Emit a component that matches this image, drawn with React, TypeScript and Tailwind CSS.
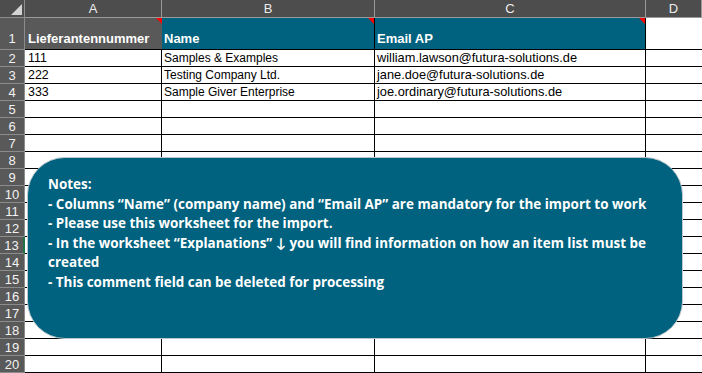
import React from 'react';

const COLS = ['A', 'B', 'C', 'D'];

const DATA = [
  ['111', 'Samples & Examples', 'william.lawson@futura-solutions.de'],
  ['222', 'Testing Company Ltd.', 'jane.doe@futura-solutions.de'],
  ['333', 'Sample Giver Enterprise', 'joe.ordinary@futura-solutions.de'],
];

const NOTES = [
  'Notes:',
  '- Columns \u201cName\u201d (company name) and \u201cEmail AP\u201d are mandatory for the import to work',
  '- Please use this worksheet for the import.',
  '- In the worksheet \u201cExplanations\u201d \u2193 you will find information on how an item list must be',
  'created',
  '- This comment field can be deleted for processing',
];

function RedMark() {
  return (
    <span className="absolute top-0 right-0 w-0 h-0 border-t-[6px] border-l-[6px] border-t-[#ff0000] border-l-transparent" />
  );
}

export default function App() {
  const rows = Array.from({ length: 19 }, (_, i) => i + 2);

  return (
    <div
      className="relative w-[702px] h-[373px] overflow-hidden bg-white"
      style={{ fontFamily: '"Liberation Sans", Arial, sans-serif' }}
    >
      <div className="grid grid-cols-[25px_137px_213px_271px_1fr] grid-rows-[18px_32px_repeat(19,17px)]">
        {/* column headers */}
        <div className="relative bg-[#4d4d4d] border-r border-b border-[#8c8c8c]">
          <svg className="absolute right-[2px] bottom-[2px]" width="11" height="11" viewBox="0 0 11 11">
            <polygon points="11,0 11,11 0,11" fill="#d4d4d4" />
          </svg>
        </div>
        {COLS.map((c) => (
          <div
            key={c}
            className="bg-[#4d4d4d] border-r border-b border-[#9a9a9a] flex items-center justify-center text-[13px] text-[#ececec]"
          >
            {c}
          </div>
        ))}

        {/* row 1 */}
        <div className="bg-[#595959] border-r border-b border-[#8c8c8c] flex items-end justify-center pb-[1px] text-[13px] text-[#f2f2f2]">
          1
        </div>
        <div className="relative bg-[#595959] border-b border-black flex items-end pl-[3px] pb-[1px] text-[13px] font-bold text-white">
          Lieferantennummer
          <RedMark />
        </div>
        <div className="relative bg-[#00627e] border-r border-b border-black flex items-end pl-[2px] pb-[1px] text-[13px] font-bold text-white">
          Name
          <RedMark />
        </div>
        <div className="relative bg-[#00627e] border-r border-b border-black flex items-end pl-[2px] pb-[1px] text-[13px] font-bold text-white">
          Email AP
          <RedMark />
        </div>
        <div className="border-b border-black" />

        {/* data rows */}
        {rows.map((r) => {
          const d = DATA[r - 2];
          return (
            <React.Fragment key={r}>
              <div
                className={`bg-[#595959] border-b border-[#8c8c8c] flex items-center justify-center text-[13px] text-[#f2f2f2] leading-none ${
                  r === 13 ? 'border-r-2 border-r-[#217346]' : 'border-r'
                }`}
              >
                {r}
              </div>
              <div className="border-r border-b border-black pl-[3px] text-[12.4px] leading-[16px] text-black whitespace-nowrap overflow-hidden">
                {d ? d[0] : ''}
              </div>
              <div className="border-r border-b border-black pl-[2px] text-[12px] leading-[16px] text-black whitespace-nowrap overflow-hidden">
                {d ? d[1] : ''}
              </div>
              <div className="border-r border-b border-black pl-[2px] text-[12.8px] leading-[16px] text-black whitespace-nowrap overflow-hidden">
                {d ? d[2] : ''}
              </div>
              <div className="border-b border-black" />
            </React.Fragment>
          );
        })}
      </div>

      {/* comment box */}
      <div
        className="absolute left-[27px] top-[157px] w-[656px] h-[182px] rounded-[38px] bg-[#00627e] border border-[#b9c6cb] pl-[20px] pt-[17px] text-white font-bold text-[13.45px] leading-[19.5px]"
        style={{ fontFamily: '"Open Sans", Lato, sans-serif' }}
      >
        {NOTES.map((line, i) => (
          <div key={i} className="whitespace-nowrap">
            {line}
          </div>
        ))}
      </div>
    </div>
  );
}
